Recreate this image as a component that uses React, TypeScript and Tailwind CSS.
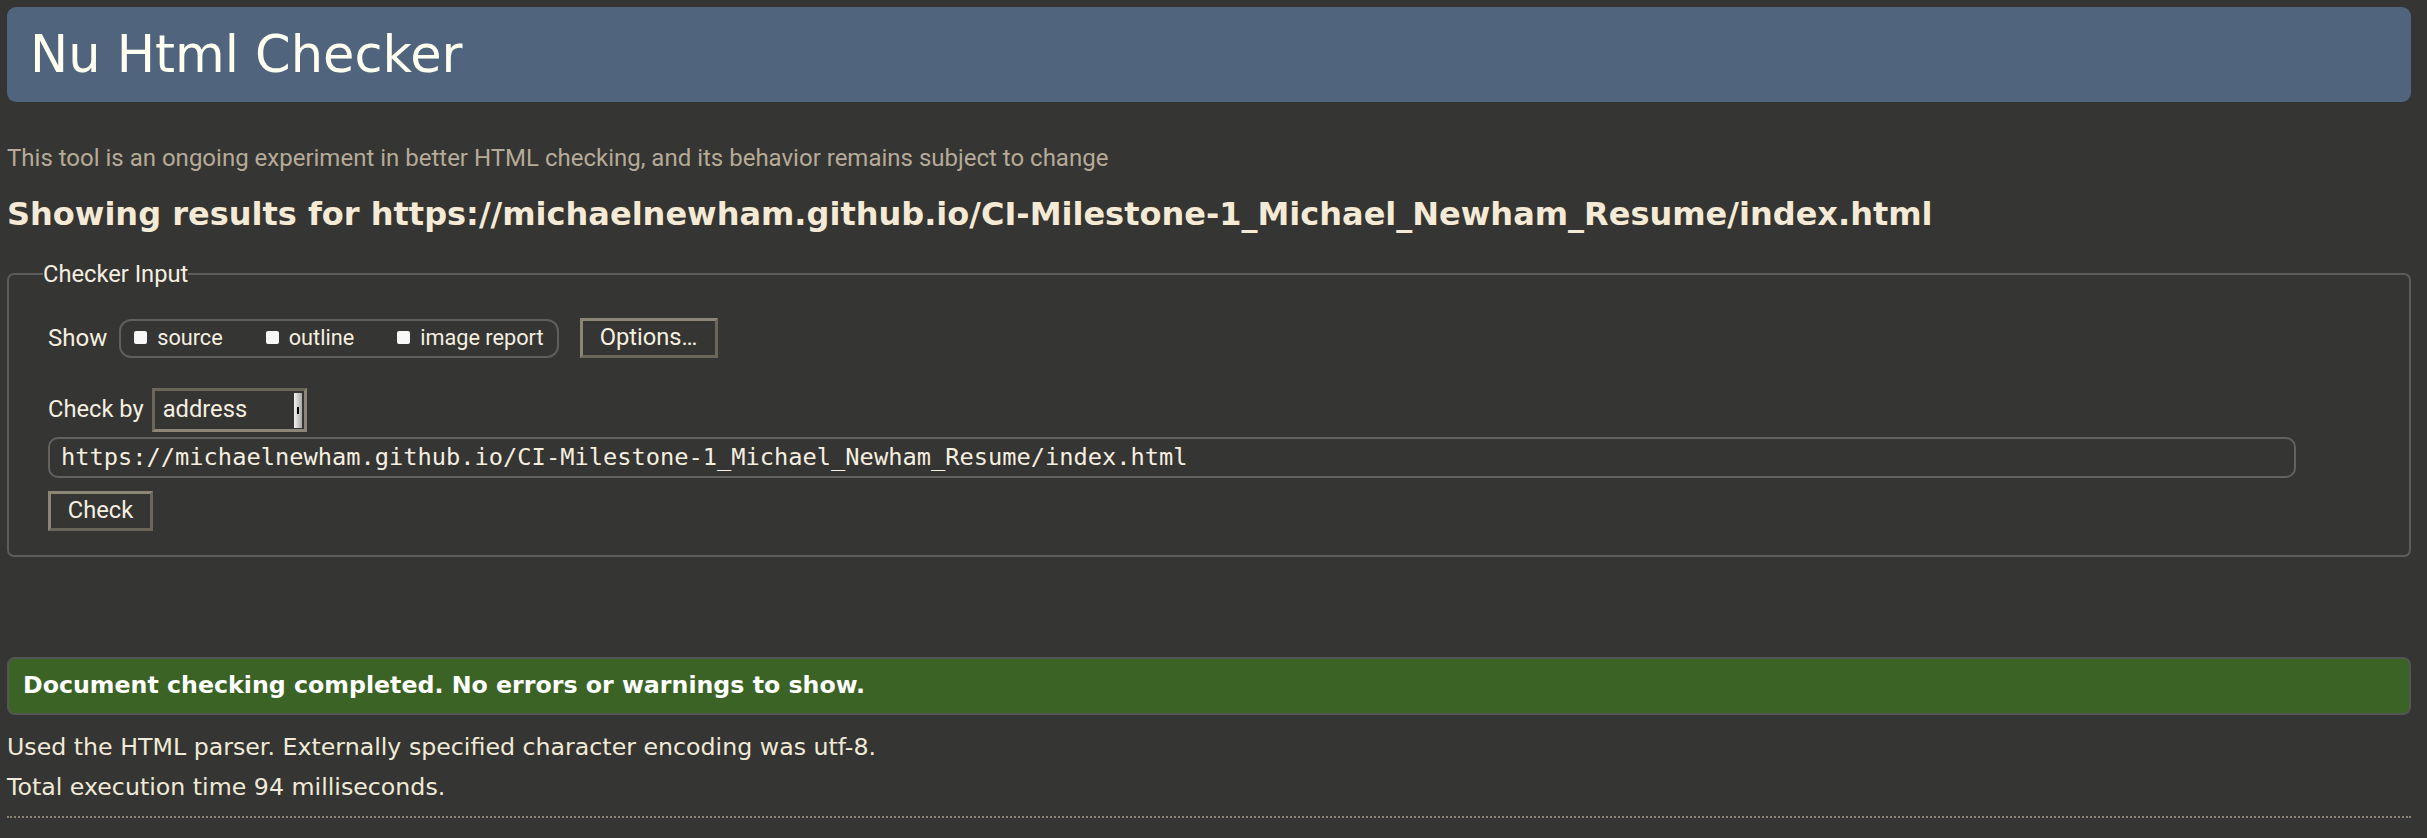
const sans = "font-['Roboto',sans-serif]";
const deja = "font-['DejaVu_Sans',sans-serif]";

function CheckOption({ label }: { label: string }) {
  return (
    <label className="flex items-center gap-[10px]">
      <span className="block h-[13px] w-[13px] rounded-[2px] bg-[#f8f8f8]" />
      <span className="text-[21.7px] leading-none">{label}</span>
    </label>
  );
}

export default function App() {
  const url =
    "https://michaelnewham.github.io/CI-Milestone-1_Michael_Newham_Resume/index.html";

  return (
    <div className={`min-h-screen bg-[#353533] pl-[7px] pr-[16px] pt-[7px] pb-[20px] text-[#f5efe0] ${sans}`}>
      {/* header */}
      <header className="flex h-[95px] items-center rounded-[9px] bg-[#50647e] pl-[23px]">
        <h1 className={`${deja} text-[51px] leading-none text-[#fffff0]`}>Nu Html Checker</h1>
      </header>

      <p className="mt-[41px] text-[24px] leading-[30px] text-[#b5ab98]">
        This tool is an ongoing experiment in better HTML checking, and its behavior remains
        subject to change
      </p>

      <h2 className={`${deja} mt-[21px] text-[32px] font-bold leading-[40px] text-[#f4ead6]`}>
        Showing results for {url}
      </h2>

      {/* checker input */}
      <fieldset className="mt-[26px] rounded-[7px] border-2 border-[#5c5c5a] pl-[39px] pb-[24px]">
        <legend className="-ml-[5px] text-[23.7px] leading-[28px]">Checker Input</legend>

        <div className="mt-[30px] flex h-[40px] items-center">
          <span className="text-[24px]">Show</span>
          <div className="ml-[12px] flex h-[39px] items-center gap-[43px] rounded-[12px] border-2 border-[#5f5f5c] pl-[13px] pr-[13px]">
            <CheckOption label="source" />
            <CheckOption label="outline" />
            <CheckOption label="image report" />
          </div>
          <button className="ml-[21px] flex h-[40px] w-[138px] items-center justify-center border-[3px] border-t-[#8c8676] border-l-[#8c8676] border-b-[#6a6659] border-r-[#6a6659] text-[23.7px]">
            Options…
          </button>
        </div>

        <div className="mt-[30px] flex h-[44px] items-center">
          <span className="text-[23.7px]">Check by</span>
          <div className="ml-[8px] flex h-[44px] w-[155px] items-center border-[3px] border-t-[#6a6659] border-l-[#6a6659] border-b-[#8c8676] border-r-[#8c8676] pl-[8px] pr-[2px]">
            <span className="flex-1 text-[23.7px]">address</span>
            <span className="relative flex h-[35px] w-[8px] items-center justify-center bg-gradient-to-r from-[#f4f4f4] to-[#a8a8a8]">
              <span className="block h-[7px] w-[2px] bg-black" />
            </span>
          </div>
        </div>

        <div className="mt-[5px] flex h-[41px] w-[2248px] items-center rounded-[10px] border-2 border-[#626260] pl-[11px]">
          <span className="font-['DejaVu_Sans_Mono',monospace] text-[23.7px] leading-none">{url}</span>
        </div>

        <button className="mt-[13px] flex h-[40px] w-[105px] items-center justify-center border-[3px] border-t-[#8c8676] border-l-[#8c8676] border-b-[#6a6659] border-r-[#6a6659] text-[23.7px]">
          Check
        </button>
      </fieldset>

      {/* result */}
      <div className="mt-[100px] flex h-[58px] items-center rounded-[8px] border-2 border-[#555553] bg-[#3b6326] pl-[14px]">
        <p className={`${deja} text-[23.7px] font-bold text-white`}>
          Document checking completed. No errors or warnings to show.
        </p>
      </div>

      <div className={`${deja} text-[23.7px] leading-[40px] text-[#f0ead8]`}>
        <p className="mt-[12px]">
          Used the HTML parser. Externally specified character encoding was utf-8.
        </p>
        <p>Total execution time 94 milliseconds.</p>
      </div>

      <hr className="mt-[9px] border-0 border-t-2 border-dotted border-[#8a8474]" />
    </div>
  );
}
